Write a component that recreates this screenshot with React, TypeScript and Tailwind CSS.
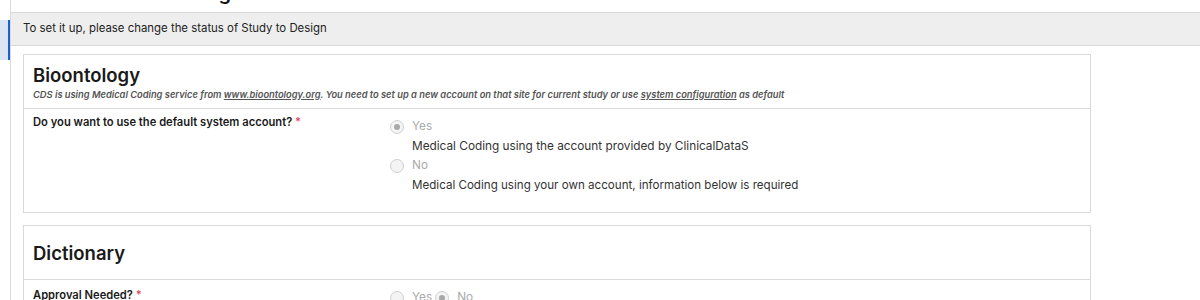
import React from "react";

function Radio({ checked }: { checked?: boolean }) {
  return (
    <span className="inline-flex h-[14px] w-[14px] shrink-0 items-center justify-center rounded-full border border-[#cfcfcf] bg-[#f4f4f4]">
      {checked && <span className="h-[6px] w-[6px] rounded-full bg-[#a8a8a8]" />}
    </span>
  );
}

export default function App() {
  return (
    <div
      className="flex h-[300px] w-[1200px] overflow-hidden bg-white text-[#222]"
      style={{ fontFamily: "Inter, 'Noto Sans', Arial, sans-serif" }}
    >
      <div className="w-[11px] shrink-0 border-r border-[#d9d9d9]">
        <div className="mt-[20px] h-[40px] border-r-2 border-[#1c5fd4] bg-[#dbe6f2]" />
      </div>
      <div className="flex-1">
        <div className="relative h-[12px] overflow-hidden">
          <div className="absolute left-[69px] top-[-19px] text-[20px] font-semibold leading-[24px] text-[#111]">
            Medical Coding
          </div>
        </div>
        <div className="flex h-[34px] items-center border-y border-[#d9d9d9] bg-[#eeeeee] pl-[12px] text-[11.4px] text-[#222]">
          To set it up, please change the status of Study to Design
        </div>
        <div className="ml-[12px] mt-[8px] w-[1068px]">
          <div className="border border-[#d9d9d9]">
            <div className="flex h-[54px] flex-col justify-center border-b border-[#d9d9d9] px-[9px]">
              <div className="text-[18.5px] font-semibold leading-[22px] text-[#1a1a1a]">Bioontology</div>
              <div className="mt-[3px] text-[9.3px] font-semibold italic leading-[11px] text-[#555]">
                CDS is using Medical Coding service from{" "}
                <span className="underline">www.bioontology.org</span>. You need to set up a new account on
                that site for current study or use <span className="underline">system configuration</span> as
                default
              </div>
            </div>
            <div className="flex px-[9px] pt-[5px] pb-[19px] text-[11.8px]">
              <div className="w-[357px] shrink-0 text-[11.2px] font-semibold leading-[16px] text-[#1a1a1a]">
                Do you want to use the default system account? <span className="text-[#e0455a]">*</span>
              </div>
              <div className="mt-[5px] flex flex-col">
                <div className="flex h-[16px] items-center gap-[8px] text-[#aaa]">
                  <Radio checked /> Yes
                </div>
                <div className="ml-[22px] mt-[3px] h-[16px] leading-[16px] text-[#333]">
                  Medical Coding using the account provided by ClinicalDataS
                </div>
                <div className="mt-[4px] flex h-[16px] items-center gap-[8px] text-[#aaa]">
                  <Radio /> No
                </div>
                <div className="ml-[22px] mt-[3px] h-[16px] text-[11.6px] leading-[16px] text-[#333]">
                  Medical Coding using your own account, information below is required
                </div>
              </div>
            </div>
          </div>
          <div className="mt-[12px] border border-[#d9d9d9]">
            <div className="flex h-[54px] flex-col justify-center border-b border-[#d9d9d9] px-[9px]">
              <div className="text-[18.5px] font-semibold leading-[22px] text-[#1a1a1a]">Dictionary</div>
            </div>
            <div className="flex px-[9px] pt-[7px] pb-[18px] text-[11.8px]">
              <div className="w-[357px] shrink-0 text-[11.2px] font-semibold leading-[16px] text-[#1a1a1a]">
                Approval Needed? <span className="text-[#e0455a]">*</span>
              </div>
              <div className="mt-[3px] flex h-[16px] items-center text-[#aaa]">
                <Radio />
                <span className="ml-[8px]">Yes</span>
                <span className="ml-[3px]">
                  <Radio checked />
                </span>
                <span className="ml-[8px]">No</span>
              </div>
            </div>
          </div>
        </div>
      </div>
    </div>
  );
}
